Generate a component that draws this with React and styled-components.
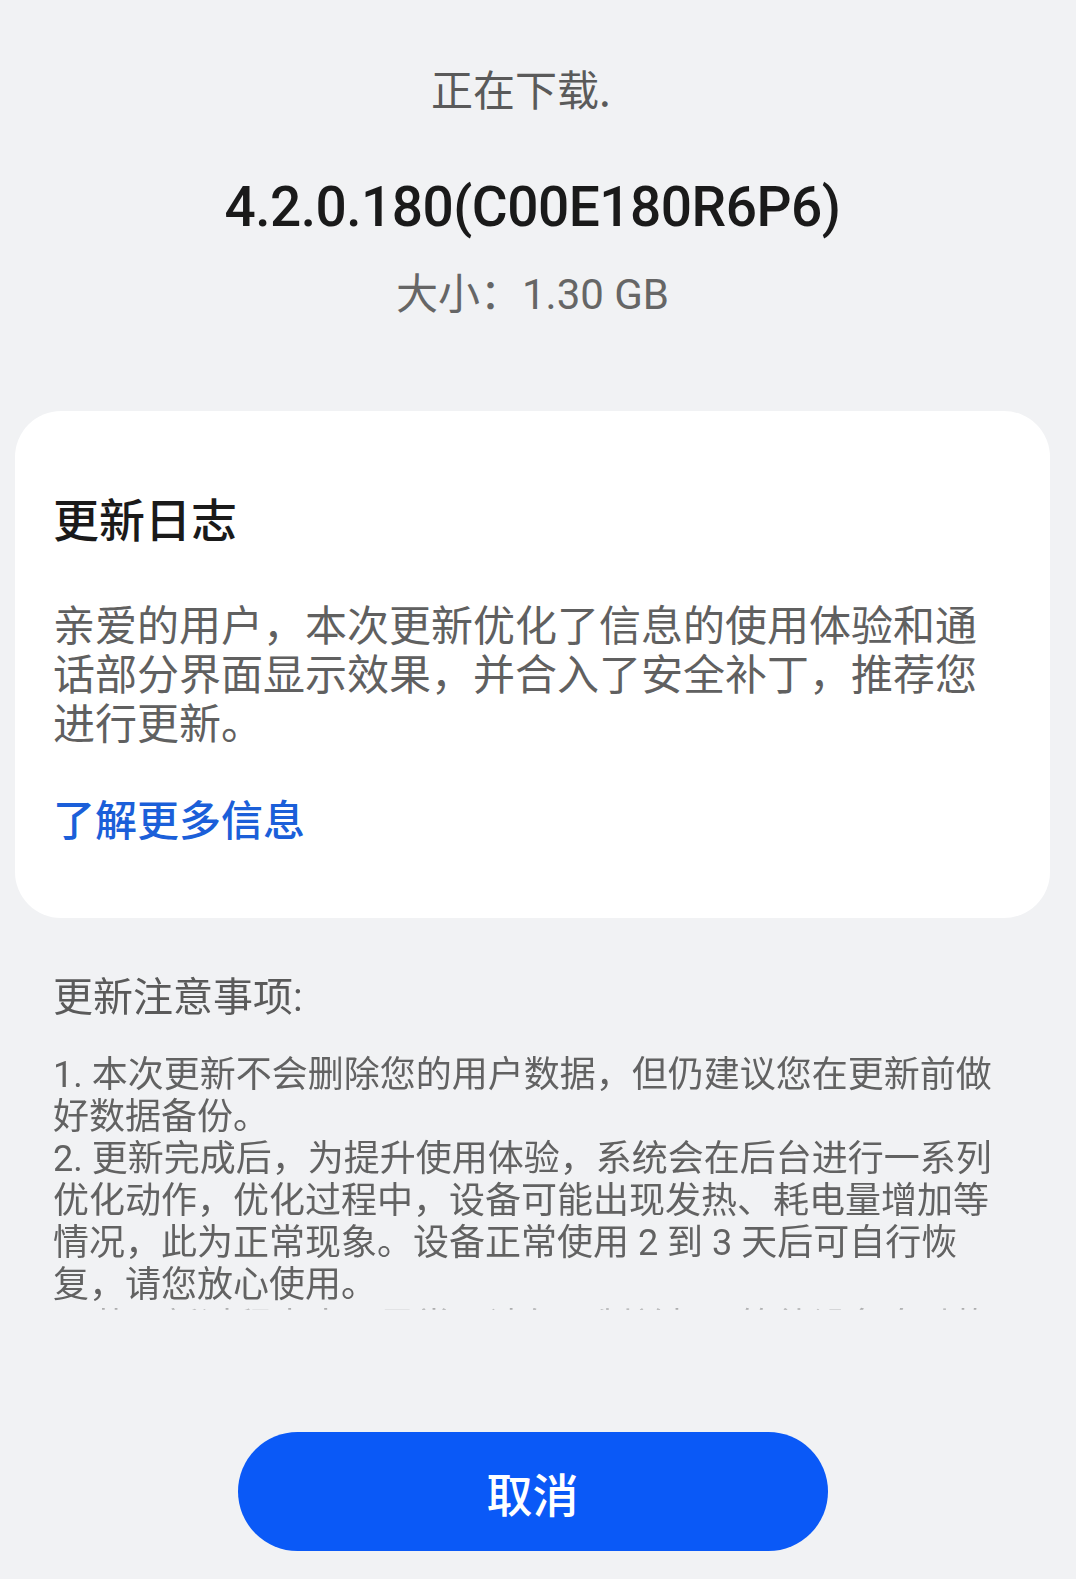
import styled, { createGlobalStyle } from 'styled-components'

const GlobalStyle = createGlobalStyle`
   html, body {
      margin: 0;
      padding: 0;
      background: #f1f2f4;
   }
   * {
      box-sizing: border-box;
   }
`

const notes = [
   ['1. 本次更新不会删除您的用户数据，但仍建议您在更新前做', '好数据备份。'],
   [
      '2. 更新完成后，为提升使用体验，系统会在后台进行一系列',
      '优化动作，优化过程中，设备可能出现发热、耗电量增加等',
      '情况，此为正常现象。设备正常使用 2 到 3 天后可自行恢',
      '复，请您放心使用。',
   ],
   ['3. 若更新过程中出现异常，请勿强制关机，等待设备自动恢', '复即可。'],
]

const App = () => {
   return (
      <Page>
         <GlobalStyle />
         <Header>
            <Status>
               正在下载.<HiddenDots>..</HiddenDots>
            </Status>
            <Version>4.2.0.180(C00E180R6P6)</Version>
            <Size>大小：1.30 GB</Size>
         </Header>
         <Card>
            <CardTitle>更新日志</CardTitle>
            <CardText>
               亲爱的用户，本次更新优化了信息的使用体验和通
               <br />
               话部分界面显示效果，并合入了安全补丁，推荐您
               <br />
               进行更新。
            </CardText>
            <MoreLink>了解更多信息</MoreLink>
         </Card>
         <Notes>
            <NotesTitle>更新注意事项:</NotesTitle>
            <NotesList>
               {notes.map((item, i) => (
                  <NoteItem key={i}>
                     {item.map((line, j) => (
                        <NoteLine key={j}>{line}</NoteLine>
                     ))}
                  </NoteItem>
               ))}
            </NotesList>
         </Notes>
         <Footer>
            <CancelButton>取消</CancelButton>
         </Footer>
      </Page>
   )
}

export default App

const Page = styled.div`
   width: 1076px;
   height: 1579px;
   padding: 0 26px 0 15px;
   display: flex;
   flex-direction: column;
   background: #f1f2f4;
   font-family: 'Roboto', 'Noto Sans CJK SC', sans-serif;
   overflow: hidden;
`
const Header = styled.div`
   display: flex;
   flex-direction: column;
   align-items: center;
   padding-top: 62px;
`
const Status = styled.div`
   font-size: 42px;
   line-height: 52px;
   color: #5a5a5a;
   font-family: 'Noto Sans CJK SC', sans-serif;
`
const HiddenDots = styled.span`
   visibility: hidden;
`
const Version = styled.div`
   margin-top: 61px;
   font-size: 55px;
   line-height: 64px;
   font-weight: 500;
   color: #1a1a1a;
   letter-spacing: -0.5px;
`
const Size = styled.div`
   margin-top: 30px;
   font-size: 42px;
   line-height: 52px;
   color: #666666;
`
const Card = styled.div`
   margin-top: 90px;
   background: #ffffff;
   border-radius: 46px;
   padding: 76px 38px 72px;
   display: flex;
   flex-direction: column;
`
const CardTitle = styled.div`
   font-family: 'Noto Sans CJK SC', sans-serif;
   font-size: 46px;
   line-height: 60px;
   font-weight: 500;
   color: #1a1a1a;
`
const CardText = styled.p`
   margin: 55px 0 0;
   font-size: 42px;
   line-height: 49px;
   color: #606060;
   white-space: nowrap;
`
const MoreLink = styled.div`
   margin-top: 41px;
   font-family: 'Noto Sans CJK SC', sans-serif;
   font-size: 42px;
   line-height: 56px;
   font-weight: 500;
   color: #1b5fd9;
`
const Notes = styled.div`
   margin-top: 54px;
   padding: 0 12px 0 38px;
   height: 338px;
   overflow: hidden;
   display: flex;
   flex-direction: column;
   mask-image: linear-gradient(to bottom, #000 calc(100% - 6px), rgba(0, 0, 0, 0.3) 100%);
`
const NotesTitle = styled.div`
   font-size: 40px;
   line-height: 52px;
   color: #5a5a5a;
`
const NotesList = styled.div`
   margin-top: 30px;
   display: flex;
   flex-direction: column;
`
const NoteItem = styled.div`
   display: flex;
   flex-direction: column;
`
const NoteLine = styled.div`
   font-size: 36px;
   line-height: 42px;
   color: #626262;
   white-space: nowrap;
`
const Footer = styled.div`
   display: flex;
   justify-content: center;
   padding-top: 122px;
`
const CancelButton = styled.button`
   width: 590px;
   height: 119px;
   border: none;
   border-radius: 60px;
   background: #0a59f7;
   color: #ffffff;
   font-family: 'Noto Sans CJK SC', sans-serif;
   font-size: 46px;
   font-weight: 500;
   cursor: pointer;
`
